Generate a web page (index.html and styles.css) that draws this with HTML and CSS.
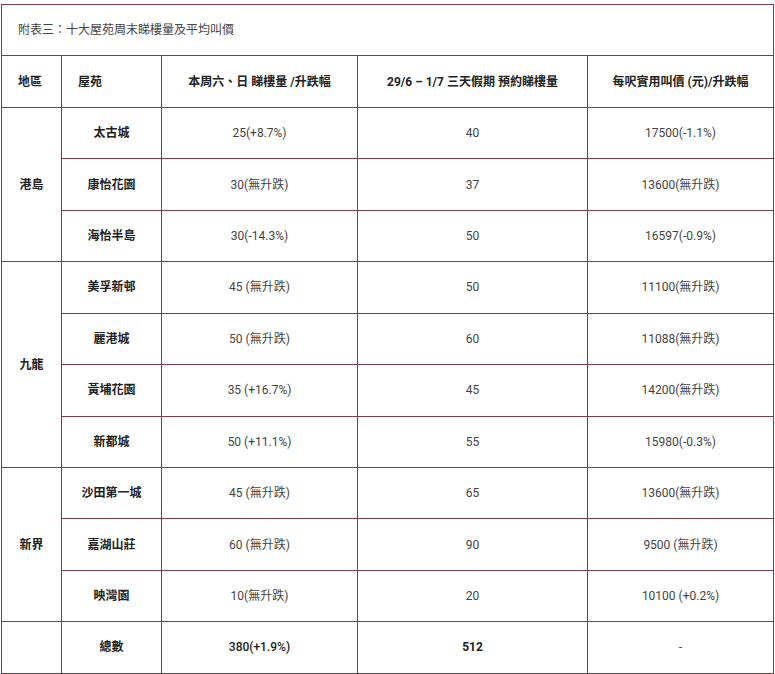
FILE: index.html
```html
<!DOCTYPE html>
<html lang="zh-Hant">
<head>
<meta charset="utf-8">
<title>附表三</title>
<link rel="stylesheet" href="styles.css">
</head>
<body>
<table class="tbl">
  <colgroup>
    <col class="c1"><col class="c2"><col class="c3"><col class="c4"><col class="c5">
  </colgroup>
  <tr class="cap"><td colspan="5">附表三：十大屋苑周末睇樓量及平均叫價</td></tr>
  <tr class="head">
    <th class="left">地區</th>
    <th class="left">屋苑</th>
    <th>本周六、日 睇樓量 /升跌幅</th>
    <th>29/6 – 1/7 三天假期 預約睇樓量</th>
    <th>每呎實用叫價 (元)/升跌幅</th>
  </tr>
  <tr><td class="region" rowspan="3">港島</td><td class="name">太古城</td><td>25(+8.7%)</td><td>40</td><td>17500(-1.1%)</td></tr>
  <tr><td class="name">康怡花園</td><td>30(無升跌)</td><td>37</td><td>13600(無升跌)</td></tr>
  <tr><td class="name">海怡半島</td><td>30(-14.3%)</td><td>50</td><td>16597(-0.9%)</td></tr>
  <tr><td class="region" rowspan="4">九龍</td><td class="name">美孚新邨</td><td>45 (無升跌)</td><td>50</td><td>11100(無升跌)</td></tr>
  <tr><td class="name">麗港城</td><td>50 (無升跌)</td><td>60</td><td>11088(無升跌)</td></tr>
  <tr><td class="name">黃埔花園</td><td>35 (+16.7%)</td><td>45</td><td>14200(無升跌)</td></tr>
  <tr><td class="name">新都城</td><td>50 (+11.1%)</td><td>55</td><td>15980(-0.3%)</td></tr>
  <tr><td class="region" rowspan="3">新界</td><td class="name">沙田第一城</td><td>45 (無升跌)</td><td>65</td><td>13600(無升跌)</td></tr>
  <tr><td class="name">嘉湖山莊</td><td>60 (無升跌)</td><td>90</td><td>9500 (無升跌)</td></tr>
  <tr><td class="name">映灣園</td><td>10(無升跌)</td><td>20</td><td>10100 (+0.2%)</td></tr>
  <tr class="total"><td></td><td class="name">總數</td><td class="med">380(+1.9%)</td><td class="strong">512</td><td>-</td></tr>
</table>
</body>
</html>
```
FILE: styles.css
```css
html, body {
  margin: 0;
  padding: 0;
  background: #ffffff;
}
body {
  padding: 4px 0 0 1px;
  font-family: Roboto, "Noto Sans CJK TC", "Noto Sans", sans-serif;
  font-size: 12px;
  color: #444;
}
.tbl {
  border-collapse: collapse;
  table-layout: fixed;
  width: 772px;
}
.c1 { width: 60px; }
.c2 { width: 100px; }
.c3 { width: 196px; }
.c4 { width: 230px; }
.c5 { width: 186px; }
.tbl td, .tbl th {
  border: 1px solid #7b3d48;
  height: 50.45px;
  padding: 0 8px;
  text-align: center;
  vertical-align: middle;
  font-weight: 400;
  line-height: 18px;
}
.cap td {
  text-align: left;
  padding-left: 16px;
  color: #444;
}
.head th {
  font-weight: 700;
  color: #222;
}
.head th.left {
  text-align: left;
  padding-left: 16px;
}
.tbl td.region, .tbl td.name {
  font-weight: 700;
  color: #222;
}
.tbl td.med {
  font-weight: 500;
  color: #222;
}
.tbl td.strong {
  font-weight: 700;
  color: #222;
}
```
